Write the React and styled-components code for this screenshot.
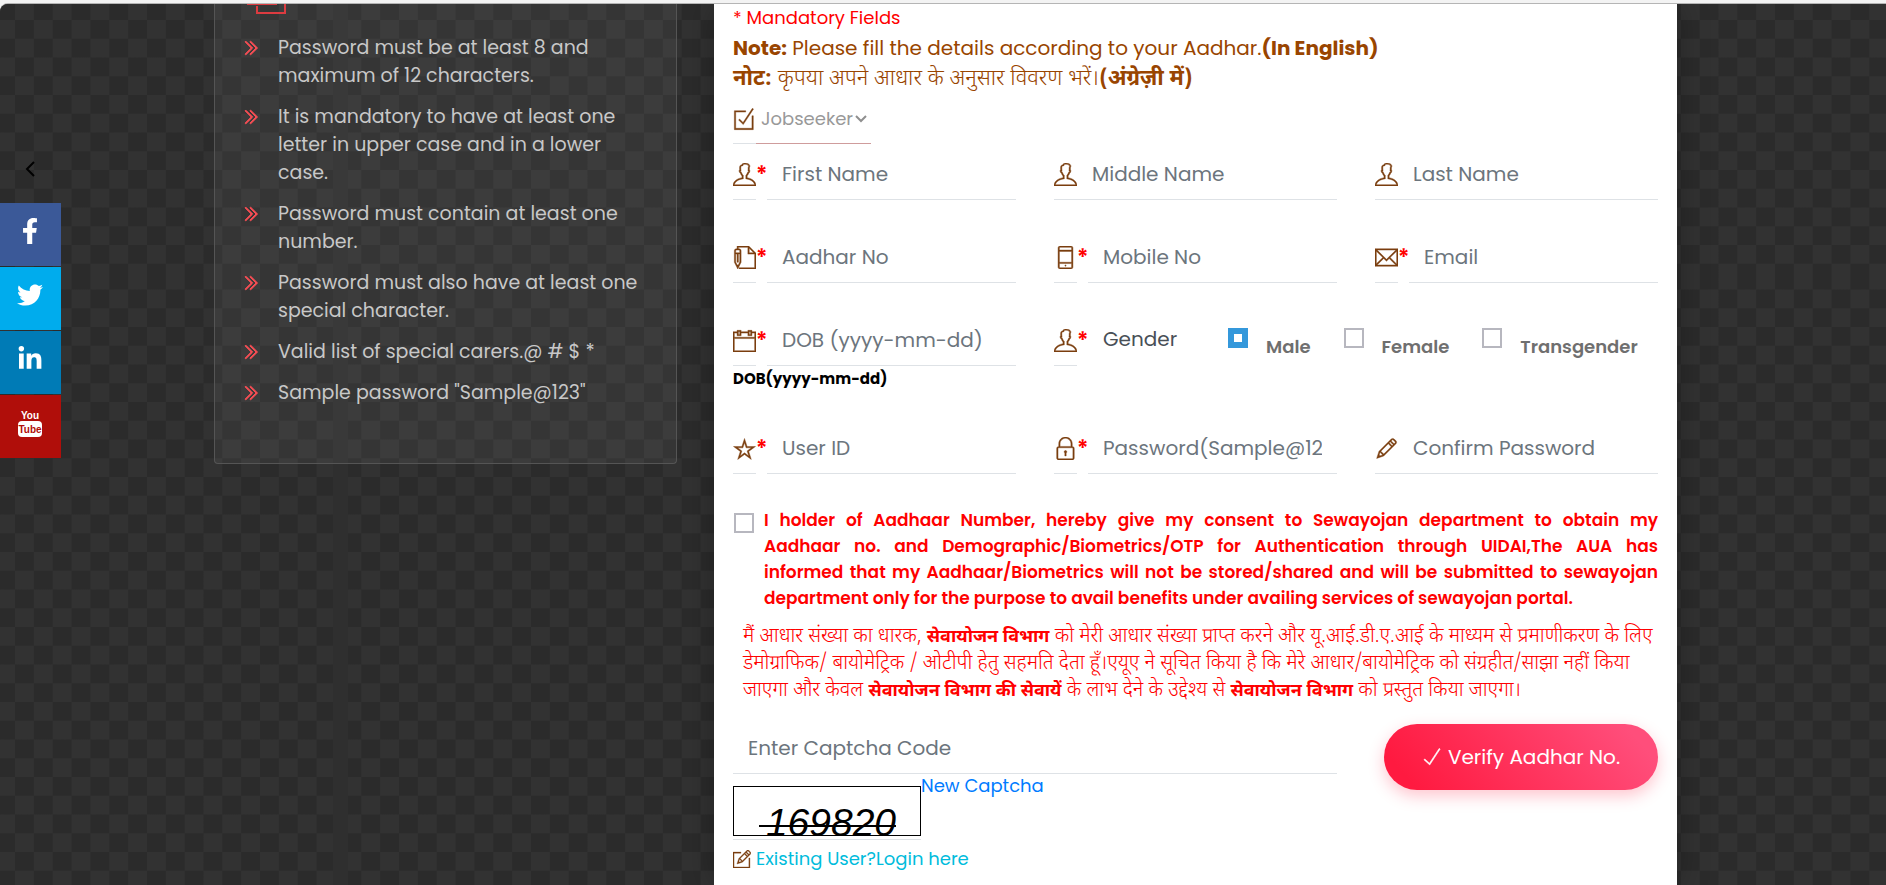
import React from 'react';
import styled, { createGlobalStyle } from 'styled-components';
import { FaFacebookF, FaTwitter, FaLinkedinIn } from 'react-icons/fa';
import {
  TfiAngleDoubleRight,
  TfiCalendar,
  TfiCheck,
  TfiCheckBox,
  TfiEmail,
  TfiLock,
  TfiMobile,
  TfiPencil,
  TfiPencilAlt,
  TfiStar,
  TfiUser,
  TfiWrite,
} from 'react-icons/tfi';

const passwordRules = [
  'Password must be at least 8 and maximum of 12 characters.',
  'It is mandatory to have at least one letter in upper case and in a lower case.',
  'Password must contain at least one number.',
  'Password must also have at least one special character.',
  'Valid list of special carers.@ # $ *',
  'Sample password "Sample@123"',
];

const genders = ['Male', 'Female', 'Transgender'];

const YoutubeLogo = () => (
  <svg width="26" height="28" viewBox="0 0 26 28" aria-hidden="true">
    <rect x="1" y="11" width="24" height="16" rx="4" fill="#fff" />
    <text x="13" y="9" textAnchor="middle" fill="#fff">You</text>
    <text x="13" y="23" textAnchor="middle" fill="#b00e0a">Tube</text>
  </svg>
);

const Checkerboard = () => (
  <Backdrop aria-hidden="true">
    <defs>
      <pattern id="checks" width="37.7" height="37.5" patternUnits="userSpaceOnUse">
        <rect width="37.7" height="37.5" fill="#323232" />
        <rect width="18.85" height="18.75" fill="#2b2b2b" />
        <rect x="18.85" y="18.75" width="18.85" height="18.75" fill="#2b2b2b" />
      </pattern>
    </defs>
    <g transform="translate(15 16)">
      <rect x="-15" y="-16" width="333" height="267" fill="url(#checks)" />
    </g>
    <g transform="translate(22 16)">
      <rect x="326" y="-16" width="100%" height="267" fill="url(#checks)" />
    </g>
    <g transform="translate(15 248)">
      <rect x="-15" y="19" width="333" height="100%" fill="url(#checks)" />
    </g>
    <g transform="translate(22 248)">
      <rect x="326" y="19" width="100%" height="100%" fill="url(#checks)" />
    </g>
  </Backdrop>
);

const Field = ({ id, icon, label, type = 'text', required }) => (
  <FieldRow>
    <FieldIcon htmlFor={id} aria-label={label}>{icon}</FieldIcon>
    {required && <Asterisk>*</Asterisk>}
    <TextInput id={id} type={type} placeholder={label} />
  </FieldRow>
);

const App = () => {
  return (
    <>
      <GlobalStyle />
      <Page>
        <Checkerboard />

        <SocialRail>
          <BackButton type="button" aria-label="Back">
            <svg width="10" height="16" viewBox="0 0 10 16" fill="none" stroke="#000" strokeWidth="2">
              <path d="M9 1L2 8l7 7" />
            </svg>
          </BackButton>
          <SocialLink href="#facebook" aria-label="Facebook" $color="#3b5998"><FaFacebookF /></SocialLink>
          <SocialLink href="#twitter" aria-label="Twitter" $color="#00aced"><FaTwitter /></SocialLink>
          <SocialLink href="#linkedin" aria-label="LinkedIn" $color="#007bb6"><FaLinkedinIn /></SocialLink>
          <SocialLink href="#youtube" aria-label="YouTube" $color="#b00e0a"><YoutubeLogo /></SocialLink>
        </SocialRail>

        <Content>
          <RulesCard>
            <CardIcon width="40" height="10" viewBox="0 0 40 10" aria-hidden="true">
              <path d="M0 0h30M10 2v7h28V0" fill="none" stroke="#dc3b40" strokeWidth="2" />
            </CardIcon>
            <RulesList>
              {passwordRules.map((rule) => (
                <Rule key={rule}>
                  <TfiAngleDoubleRight />
                  <span>{rule}</span>
                </Rule>
              ))}
            </RulesList>
          </RulesCard>

          <FormPanel>
            <Mandatory>* Mandatory Fields</Mandatory>
            <Note>
              <strong>Note:</strong> Please fill the details according to your Aadhar.
              <strong>(In English)</strong>
            </Note>
            <HindiNote lang="hi">
              <strong>नोट:</strong> कृपया अपने आधार के अनुसार विवरण भरें।<strong>(अंग्रेज़ी में)</strong>
            </HindiNote>

            <RoleRow>
              <FieldIcon htmlFor="role" aria-label="User type"><TfiCheckBox /></FieldIcon>
              <RoleSelectBox>
                <RoleSelect id="role" defaultValue="Jobseeker">
                  <option>Jobseeker</option>
                </RoleSelect>
                <svg width="12" height="8" viewBox="0 0 12 8" fill="none" stroke="#8f8f8f" strokeWidth="2">
                  <path d="M1 1l5 5 5-5" />
                </svg>
              </RoleSelectBox>
            </RoleRow>

            <FieldGrid>
              <Field id="first" icon={<TfiUser />} label="First Name" required />
              <Field id="middle" icon={<TfiUser />} label="Middle Name" />
              <Field id="last" icon={<TfiUser />} label="Last Name" />
              <Field id="aadhar" icon={<TfiWrite />} label="Aadhar No" required />
              <Field id="mobile" icon={<TfiMobile />} label="Mobile No" required />
              <Field id="email" icon={<TfiEmail />} label="Email" type="email" required />
              <div>
                <Field id="dob" icon={<TfiCalendar />} label="DOB (yyyy-mm-dd)" required />
                <DobHint>DOB(yyyy-mm-dd)</DobHint>
              </div>
              <GenderRow role="radiogroup" aria-labelledby="gender-title">
                <FieldIcon as="span"><TfiUser /></FieldIcon>
                <Asterisk>*</Asterisk>
                <GenderTitle id="gender-title">Gender</GenderTitle>
                <GenderOptions>
                  {genders.map((gender, index) => (
                    <GenderOption key={gender}>
                      <Radio type="radio" name="gender" defaultChecked={index === 0} />
                      <span>{gender}</span>
                    </GenderOption>
                  ))}
                </GenderOptions>
              </GenderRow>
              <Field id="user" icon={<TfiStar />} label="User ID" required />
              <Field id="password" icon={<TfiLock />} label="Password(Sample@123)" type="password" required />
              <Field id="confirm" icon={<TfiPencil />} label="Confirm Password" type="password" />
            </FieldGrid>

            <Consent>
              <CheckBox type="checkbox" />
              <ConsentText>
                <span>I holder of Aadhaar Number, hereby give my consent to Sewayojan department to obtain my</span>
                <span>Aadhaar no. and Demographic/Biometrics/OTP for Authentication through UIDAI,The AUA has</span>
                <span>informed that my Aadhaar/Biometrics will not be stored/shared and will be submitted to sewayojan</span>
                <span>department only for the purpose to avail benefits under availing services of sewayojan portal.</span>
              </ConsentText>
            </Consent>
            <HindiConsent lang="hi">
              मैं आधार संख्या का धारक, <strong>सेवायोजन विभाग</strong> को मेरी आधार संख्या प्राप्त करने और यू.आई.डी.ए.आई के माध्यम से प्रमाणीकरण के लिए<br />
              डेमोग्राफिक/ बायोमेट्रिक / ओटीपी हेतु सहमति देता हूँ।एयूए ने सूचित किया है कि मेरे आधार/बायोमेट्रिक को संग्रहीत/साझा नहीं किया<br />
              जाएगा और केवल <strong>सेवायोजन विभाग की सेवायें</strong> के लाभ देने के उद्देश्य से <strong>सेवायोजन विभाग</strong> को प्रस्तुत किया जाएगा।
            </HindiConsent>

            <SubmitRow>
              <FieldRow>
                <TextInput type="text" placeholder="Enter Captcha Code" aria-label="Enter Captcha Code" />
              </FieldRow>
              <VerifyButton type="button"><TfiCheck /> Verify Aadhar No.</VerifyButton>
            </SubmitRow>

            <CaptchaRow>
              <CaptchaFrame>
                <CaptchaBox>
                  <span>169820</span>
                </CaptchaBox>
              </CaptchaFrame>
              <CaptchaLink href="#captcha">New Captcha</CaptchaLink>
            </CaptchaRow>

            <LoginLink href="#login"><TfiPencilAlt /> Existing User?Login here</LoginLink>
          </FormPanel>
        </Content>
      </Page>
    </>
  );
};

// Styled Components
const GlobalStyle = createGlobalStyle`
  * {
    box-sizing: border-box;
  }

  body {
    margin: 0;
    padding-top: 4px;
    background-color: #f3f3f3;
    font-family: Poppins, Inter, 'Noto Sans', sans-serif;
  }

  p, ul {
    margin: 0;
    padding: 0;
  }

  input, select, button {
    font-family: inherit;
  }

  :lang(hi) {
    font-family: 'Noto Sans Devanagari', 'Noto Sans', sans-serif;
    font-weight: 300;
  }

  :lang(hi) strong {
    font-weight: 700;
  }
`;

const Page = styled.div`
  position: relative;
  min-height: calc(100vh - 4px);
  overflow: hidden;
  border-top-left-radius: 8px;
  background-color: #2f2f2f;
  box-shadow: 0 -1px 0 #b5b5b5;
`;

const Backdrop = styled.svg`
  position: absolute;
  inset: 0;
  width: 100%;
  height: 100%;
`;

const SocialRail = styled.nav`
  position: absolute;
  top: 146px;
  left: 0;
  z-index: 1;
  display: flex;
  flex-direction: column;
  gap: 1px;
`;

const BackButton = styled.button`
  width: 60px;
  height: 52px;
  padding: 10px 0 24px;
  border: 0;
  background: none;
  line-height: 0;
`;

const SocialLink = styled.a`
  display: flex;
  align-items: flex-start;
  justify-content: center;
  width: 61px;
  height: 63px;
  padding: 15px 2px 0 0;
  font-size: 26px;
  color: #fff;
  background-color: ${props => props.$color};

  text {
    font-family: 'Liberation Sans Narrow', 'Liberation Sans', sans-serif;
    font-size: 10px;
    font-weight: 700;
  }
`;

const Content = styled.main`
  position: relative;
  display: grid;
  grid-template-columns: minmax(0, 463fr) minmax(0, 963fr);
  align-items: start;
  gap: 37px;
  padding: 0 209px 0 214px;
`;

const RulesCard = styled.aside`
  padding: 0 28px 56px;
  border: 1px solid #555;
  border-top: 0;
  border-radius: 0 0 4px 4px;
  background-color: rgba(255, 255, 255, 0.05);
`;

const CardIcon = styled.svg`
  display: block;
  margin: 0 0 20px 4px;
`;

const RulesList = styled.ul`
  display: flex;
  flex-direction: column;
  gap: 13px;
  list-style: none;
`;

const Rule = styled.li`
  display: flex;
  gap: 18px;
  font-size: 19px;
  line-height: 28px;
  color: #c8c8c8;

  svg {
    flex: none;
    width: 17px;
    height: 20px;
    margin-top: 4px;
    color: #ff4f56;
    stroke-width: 1;
  }
`;

const FormPanel = styled.section`
  min-height: calc(100vh - 4px);
  padding: 0 19px 8px;
  background-color: #fff;
  box-shadow: 0 0 30px rgba(0, 0, 0, 0.3);
`;

const Mandatory = styled.p`
  padding-bottom: 2px;
  font-size: 18px;
  line-height: 27px;
  color: #ff0000;
`;

const Note = styled.p`
  font-size: 20px;
  line-height: 30px;
  color: #994500;
`;

const HindiNote = styled(Note)`
  padding-top: 2px;
  font-size: 22px;
`;

const RoleRow = styled.div`
  display: flex;
  align-items: stretch;
  height: 49px;
  margin-bottom: 6px;
`;

const RoleSelectBox = styled.div`
  display: flex;
  align-items: center;
  width: 115px;
  border-bottom: 1px solid #cf9c9c;

  svg {
    margin-left: -16px;
    pointer-events: none;
  }
`;

const RoleSelect = styled.select`
  width: 100%;
  padding: 0 0 2px 5px;
  border: 0;
  background: none;
  appearance: none;
  font-size: 18px;
  color: #999;
`;

const FieldGrid = styled.div`
  display: grid;
  grid-template-columns: repeat(3, minmax(0, 1fr));
  gap: 33px 38px;
`;

const FieldRow = styled.div`
  display: flex;
  height: 50px;
`;

const FieldIcon = styled.label`
  display: flex;
  flex: none;
  align-items: center;
  justify-content: center;
  width: 23px;
  border-bottom: 1px solid #dee2e6;
  font-size: 23px;
  color: #7b3f10;

  svg {
    flex: none;
    stroke-width: 0.3;
  }
`;

const Asterisk = styled.span`
  flex: none;
  width: 11px;
  font-size: 22px;
  font-weight: 600;
  line-height: 50px;
  color: #ff0000;
`;

const TextInput = styled.input`
  flex: 1;
  min-width: 0;
  padding: 0 15px 2px;
  border: 0;
  border-bottom: 1px solid #dee2e6;
  background: none;
  font-size: 20px;
  color: #495057;

  &::placeholder {
    color: #6c757d;
    opacity: 1;
  }
`;

const DobHint = styled.p`
  font-size: 15px;
  font-weight: 700;
  line-height: 25px;
  color: #000;
`;

const GenderRow = styled.div`
  display: flex;
  grid-column: span 2;
  height: 50px;
`;

const GenderTitle = styled.span`
  width: 140px;
  padding-left: 15px;
  font-size: 20px;
  line-height: 46px;
  color: #495057;
`;

const GenderOptions = styled.div`
  display: flex;
  gap: 33px;
  padding-top: 12px;
`;

const GenderOption = styled.label`
  display: flex;
  align-items: flex-start;
  gap: 18px;
  font-size: 18px;
  font-weight: 600;
  line-height: 38px;
  color: #6f6f6f;
`;

const CheckBox = styled.input`
  flex: none;
  width: 20px;
  height: 20px;
  margin: 0;
  border: 2px solid #b7b7bf;
  background-color: #fff;
  appearance: none;
`;

const Radio = styled(CheckBox)`
  &:checked {
    border: 6px solid #3498db;
  }
`;

const Consent = styled.label`
  display: flex;
  gap: 10px;
  padding: 33px 0 0 1px;

  input {
    margin-top: 6px;
  }
`;

const ConsentText = styled.span`
  flex: 1;
  font-size: 17px;
  font-weight: 600;
  line-height: 26px;
  color: #ff0000;

  span {
    display: block;
    text-align: justify;
    text-align-last: justify;
  }

  span:last-child {
    text-align-last: left;
  }
`;

const HindiConsent = styled.p`
  padding: 13px 0 0 10px;
  font-size: 20px;
  line-height: 27px;
  color: #ff0000;
  white-space: nowrap;

  strong {
    font-size: 18px;
    line-height: 18px;
  }
`;

const SubmitRow = styled.div`
  display: grid;
  grid-template-columns: minmax(0, 604fr) minmax(0, 274fr);
  gap: 47px;
  margin-top: 19px;
`;

const VerifyButton = styled.button`
  display: flex;
  align-items: center;
  justify-content: center;
  gap: 6px;
  height: 66px;
  border: 0;
  border-radius: 33px;
  font-size: 20px;
  color: #fff;
  background: linear-gradient(50deg, #ff1a40 10%, #ff4e7b 90%);
  box-shadow: 0 6px 16px rgba(255, 26, 64, 0.25);

  svg {
    stroke-width: 0.5;
  }
`;

const CaptchaRow = styled.div`
  display: flex;
  align-items: flex-start;
  margin-top: -17px;
`;

const CaptchaFrame = styled.div`
  padding: 13px 0 3px;
  border-bottom: 1px solid #dee2e6;
`;

const CaptchaBox = styled.div`
  position: relative;
  display: flex;
  justify-content: center;
  width: 188px;
  height: 50px;
  overflow: hidden;
  border: 1px solid #000;

  span {
    padding: 14px 0 0 8px;
    font-family: 'Liberation Sans', Arial, sans-serif;
    font-size: 39px;
    font-style: italic;
    line-height: 44px;
  }

  /* line struck through the digits */
  &::after {
    content: '';
    position: absolute;
    top: 38px;
    left: 25px;
    width: 137px;
    height: 2px;
    background-color: #000;
  }
`;

const CaptchaLink = styled.a`
  font-size: 18px;
  line-height: 26px;
  color: #007bff;
  text-decoration: none;
`;

const LoginLink = styled.a`
  display: flex;
  align-items: center;
  gap: 5px;
  margin-top: 5px;
  font-size: 18px;
  line-height: 28px;
  color: #00bcdc;
  text-decoration: none;

  svg {
    color: #7b3f10;
    stroke-width: 0.3;
  }
`;

export default App;
